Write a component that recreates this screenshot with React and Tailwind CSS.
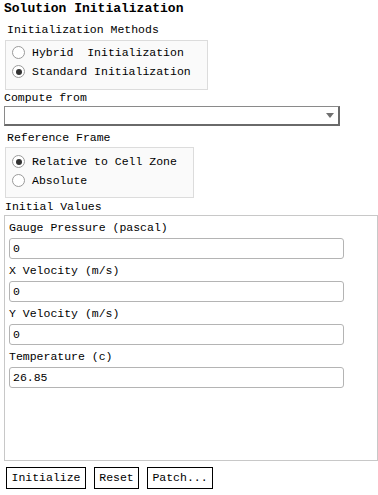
import React from "react";

function Radio({ checked, label }) {
  return (
    <div className="flex items-center h-[19px]">
      <span className="w-[13px] h-[13px] rounded-full border border-[#9a9a9a] bg-white flex items-center justify-center shrink-0">
        {checked && <span className="w-[6px] h-[6px] rounded-full bg-[#333]" />}
      </span>
      <span className="ml-[7px] whitespace-pre">{label}</span>
    </div>
  );
}

function Field({ label, value }) {
  return (
    <div className="flex flex-col">
      <div className="h-[20px] leading-[20px] whitespace-pre">{label}</div>
      <div className="h-[21px] w-[335px] border border-[#b4b4b4] rounded-[3px] bg-white pl-[3px] leading-[19px]">
        {value}
      </div>
    </div>
  );
}

export default function App() {
  return (
    <div
      className="w-[378px] h-[495px] bg-white text-black text-[11.5px] leading-[16px] flex flex-col"
      style={{ fontFamily: '"Liberation Mono", "Courier New", monospace' }}
    >
      <div className="pt-[1px] pl-[4px] h-[17px] font-bold text-[13px] leading-[16px]">
        Solution Initialization
      </div>
      <div className="mt-[5px] pl-[7px] h-[16px]">Initialization Methods</div>
      <div className="mt-[2px] ml-[5px] w-[203px] h-[50px] border border-[#dcdcdc] bg-[#fafafa] pt-[2px] pl-[6px]">
        <Radio label="Hybrid  Initialization" />
        <Radio checked label="Standard Initialization" />
      </div>
      <div className="pl-[4px] h-[16px]">Compute from</div>
      <div className="ml-[4px] w-[336px] h-[20px] border border-[#8a8a8a] border-r-2 border-b-2 border-r-[#6a6a6a] border-b-[#6a6a6a] bg-white flex items-center justify-end pr-[4px]">
        <svg width="8" height="5" viewBox="0 0 8 5">
          <path d="M0 0 H8 L4 5 Z" fill="#707070" />
        </svg>
      </div>
      <div className="mt-[4px] pl-[7px] h-[16px]">Reference Frame</div>
      <div className="mt-[1px] ml-[5px] w-[189px] h-[51px] border border-[#dcdcdc] bg-[#fafafa] pt-[4px] pl-[6px]">
        <Radio checked label="Relative to Cell Zone" />
        <Radio label="Absolute" />
      </div>
      <div className="mt-[1px] pl-[5px] h-[16px]">Initial Values</div>
      <div className="ml-[4px] w-[374px] h-[246px] border border-[#c8c8c8] pt-[2px] pl-[4px] flex flex-col gap-[2px]">
        <Field label="Gauge Pressure (pascal)" value="0" />
        <Field label="X Velocity (m/s)" value="0" />
        <Field label="Y Velocity (m/s)" value="0" />
        <Field label="Temperature (c)" value="26.85" />
      </div>
      <div className="mt-[6px] ml-[6px] flex gap-[8px]">
        <button className="w-[80px] h-[22px] border border-black bg-white leading-[20px] text-center">Initialize</button>
        <button className="w-[45px] h-[22px] border border-black bg-white leading-[20px] text-center">Reset</button>
        <button className="w-[66px] h-[22px] border border-black bg-white leading-[20px] text-center">Patch...</button>
      </div>
    </div>
  );
}
